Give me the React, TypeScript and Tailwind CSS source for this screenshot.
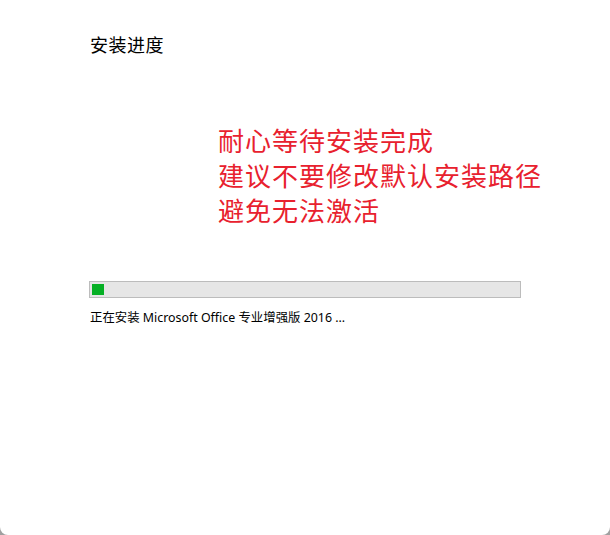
export default function App() {
  return (
    <div className="h-[535px] w-[610px] bg-[#a0a0a0]">
      <div className="flex h-full w-full flex-col rounded-b-[8px] bg-white pl-[90px] pt-[32px] font-['Noto_Sans_CJK_SC',sans-serif]">
        <h1 className="text-[18px] leading-[24px] tracking-[0.5px] text-black">安装进度</h1>

        <div className="mt-[66px] pl-[128px] text-[26px] leading-[35px] tracking-[1px] text-[#e8212e]">
          <p>耐心等待安装完成</p>
          <p>建议不要修改默认安装路径</p>
          <p>避免无法激活</p>
        </div>

        <div className="ml-[-1px] mt-[54px] h-[17px] w-[432px] border border-[#bcbcbc] bg-[#e6e6e6] p-[2px]">
          <div className="h-full w-[12px] bg-[#06b025]" />
        </div>

        <p className="mt-[12px] font-['Noto_Sans','Noto_Sans_CJK_SC',sans-serif] text-[12.4px] leading-[16px] text-black">
          正在安装 Microsoft Office 专业增强版 2016 ...
        </p>
      </div>
    </div>
  );
}
